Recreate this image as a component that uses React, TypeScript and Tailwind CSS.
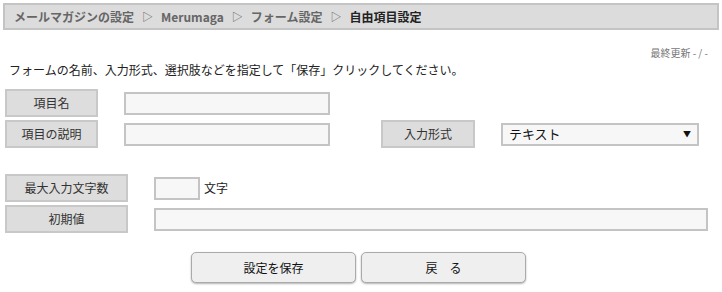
import React from 'react';

const font = { fontFamily: '"Noto Sans CJK JP", "Noto Sans", sans-serif' };

const Label = ({ text, className = '' }: { text: string; className?: string }) => (
  <div
    className={`h-[28px] flex items-center justify-center bg-[#dddddd] border-2 border-[#c8c8c8] text-[12px] text-[#333] ${className}`}
  >
    {text}
  </div>
);

const Field = ({ className = '' }: { className?: string }) => (
  <input
    type="text"
    className={`h-[23px] bg-[#f7f7f7] border-2 border-[#c4c4c4] outline-none ${className}`}
  />
);

const App = () => {
  return (
    <div className="w-[722px] h-[292px] bg-white text-[#222]" style={font}>
      <div className="mx-[3px] pt-[3px]">
        <div className="h-[27px] bg-[#dcdcdc] border-2 border-[#c4c4c4] flex items-center pl-[9px] text-[12px] font-bold text-[#666] gap-[8px]">
          <span>メールマガジンの設定</span>
          <span className="font-normal text-[11px]">▷</span>
          <span>Merumaga</span>
          <span className="font-normal text-[11px]">▷</span>
          <span>フォーム設定</span>
          <span className="font-normal text-[11px]">▷</span>
          <span className="text-[#222]">自由項目設定</span>
        </div>
      </div>

      <div className="flex justify-end pr-[14px] mt-[17px] text-[10px] text-[#777] leading-[12px]">
        最終更新 - / -
      </div>

      <p className="pl-[9px] mt-[3px] text-[12px] leading-[16px]">
        フォームの名前、入力形式、選択肢などを指定して「保存」クリックしてください。
      </p>

      <div className="pl-[5px] mt-[11px] flex flex-col gap-[3px]">
        <div className="flex items-center">
          <Label text="項目名" className="w-[93px]" />
          <Field className="ml-[26px] w-[206px]" />
        </div>
        <div className="flex items-center">
          <Label text="項目の説明" className="w-[93px]" />
          <Field className="ml-[26px] w-[206px]" />
          <Label text="入力形式" className="ml-[51px] w-[94px]" />
          <div className="ml-[26px] w-[198px] h-[23px] bg-[#f7f7f7] border-2 border-[#c4c4c4] flex items-center justify-between pl-[6px] pr-[6px] text-[13px] text-[#111]">
            <span>テキスト</span>
            <span className="text-[8px]">▼</span>
          </div>
        </div>
      </div>

      <div className="pl-[5px] mt-[26px] flex flex-col gap-[3px]">
        <div className="flex items-center">
          <Label text="最大入力文字数" className="w-[123px]" />
          <Field className="ml-[26px] w-[46px]" />
          <span className="ml-[4px] text-[12px]">文字</span>
        </div>
        <div className="flex items-center">
          <Label text="初期値" className="w-[123px]" />
          <Field className="ml-[26px] w-[554px]" />
        </div>
      </div>

      <div className="mt-[19px] flex justify-center gap-[5px] pr-[5px]">
        <button className="w-[165px] h-[31px] rounded-[5px] bg-[#efefef] border border-[#aaaaaa] shadow-[0_1px_2px_rgba(0,0,0,0.3)] text-[12px] text-[#111]">
          設定を保存
        </button>
        <button className="w-[165px] h-[31px] rounded-[5px] bg-[#efefef] border border-[#aaaaaa] shadow-[0_1px_2px_rgba(0,0,0,0.3)] text-[12px] text-[#111]">
          戻　る
        </button>
      </div>
    </div>
  );
};

export default App;
